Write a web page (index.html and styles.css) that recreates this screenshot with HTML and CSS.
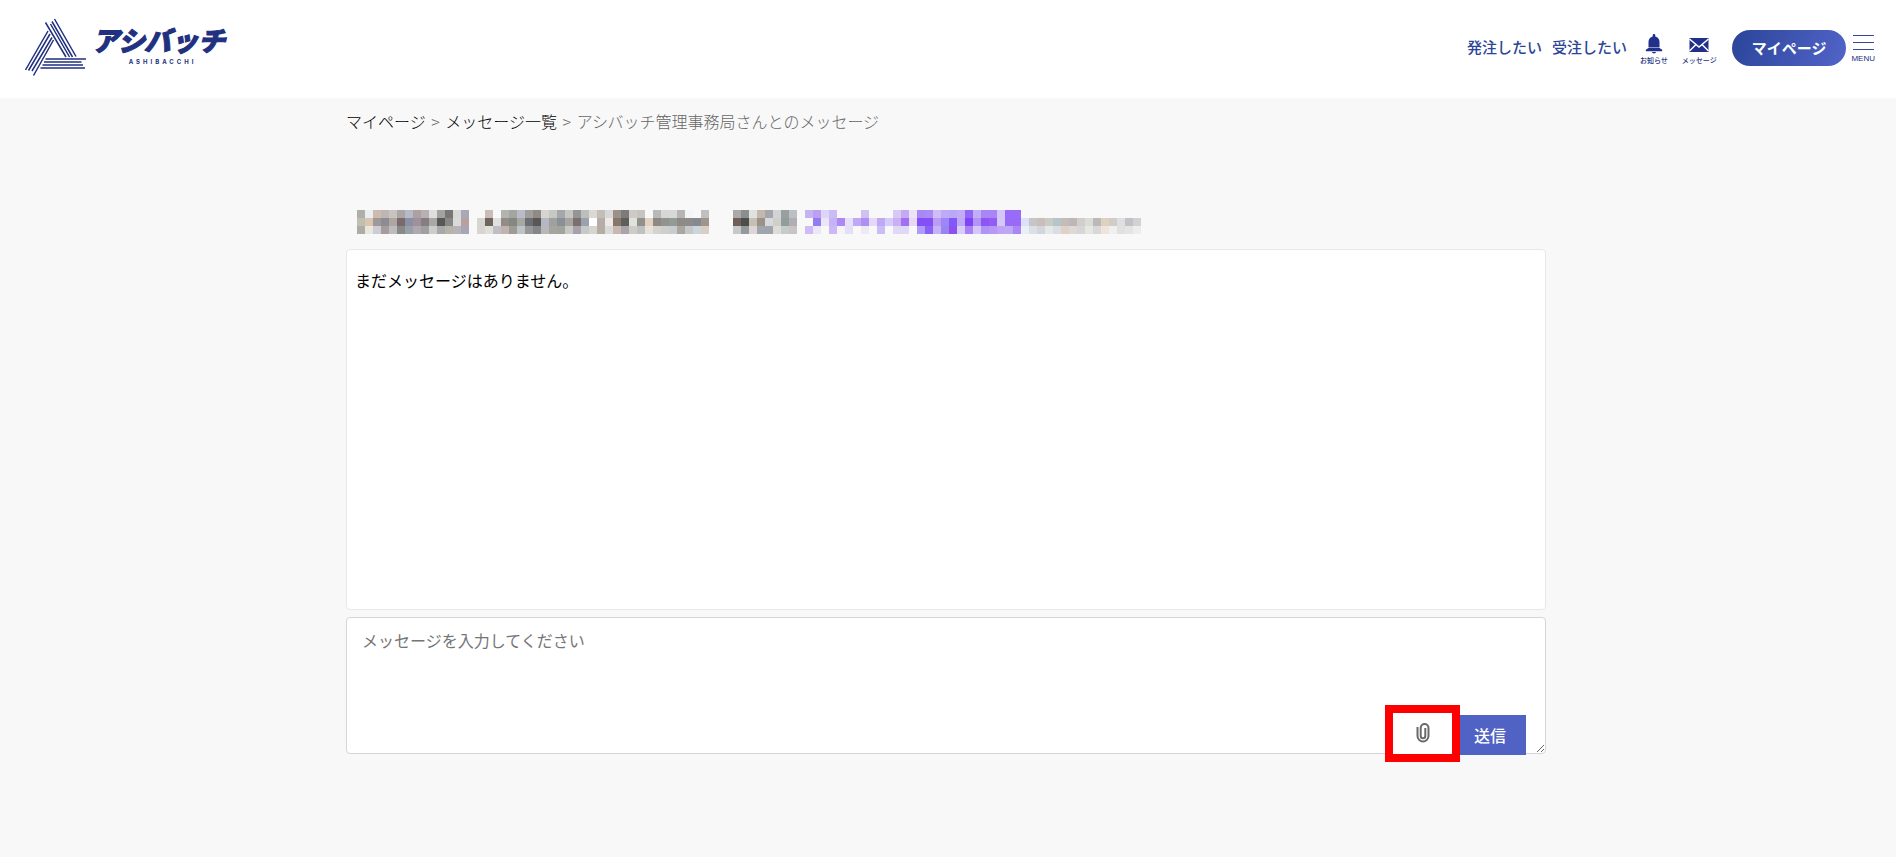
FILE: index.html
```html
<!DOCTYPE html>
<html lang="ja">
<head>
<meta charset="utf-8">
<meta name="viewport" content="width=device-width, initial-scale=1">
<title>アシバッチ管理事務局さんとのメッセージ</title>
<link rel="stylesheet" href="styles.css">
</head>
<body>
<header class="header">
  <a class="logo" href="#">
    <svg class="logo-mark" viewBox="0 0 64 60" aria-hidden="true">
      <path d="M1.5 52 24 13M4.5 52.500 26 16M8 53 28 19.500M9.500 57.500 29.500 22M21.500 4.500 42 39M26.500 6 45.500 39M28 3.500 48.500 39M30.500 1 52 38.500"/>
      <path d="M21.500 41H62M20 44H57.500M18.500 47H59M16.500 50H61"/>
    </svg>
    <span class="logo-text">
      <span class="logo-name">アシバッチ</span>
      <span class="logo-sub">ASHIBACCHI</span>
    </span>
  </a>
  <nav class="nav">
    <a class="nav-link" href="#">発注したい</a>
    <a class="nav-link" href="#">受注したい</a>
    <a class="nav-icon" href="#">
      <svg viewBox="0 0 20 20" width="20" height="20" aria-hidden="true"><path d="M10 0c.9 0 1.300.6 1.300 1.400v1C14 3 15.500 5 15.500 8v5.500h-11V8c0-3 1.500-5 4.200-5.600v-1C8.700.6 9.100 0 10 0zM4.500 14h11l2.700 1.700v1.600H1.800v-1.600zM8 18h4c0 .9-.9 1.400-2 1.400S8 18.900 8 18z"/></svg>
      <span>お知らせ</span>
    </a>
    <a class="nav-icon" href="#">
      <svg viewBox="0 0 20 20" width="20" height="20" aria-hidden="true"><path d="M.5 4h19v14H.5z"/><path class="fold" d="M.5 5 10 13l9.500-8M.5 17 7 10.500M19.500 17 13 10.500"/></svg>
      <span>メッセージ</span>
    </a>
    <a class="mypage" href="#">マイページ</a>
    <button class="menu" type="button">
      <span class="menu-bars"></span>
      <span>MENU</span>
    </button>
  </nav>
</header>
<main class="main">
  <nav class="crumbs" aria-label="パンくず">
    <a href="#">マイページ</a> <span class="sep">&gt;</span> <a href="#">メッセージ一覧</a> <span class="sep">&gt;</span> <span>アシバッチ管理事務局さんとのメッセージ</span>
  </nav>
  <svg class="mosaic" viewBox="0 0 98 3" shape-rendering="crispEdges" aria-hidden="true"></svg>
  <section class="thread">
    <p>まだメッセージはありません。</p>
  </section>
  <form class="composer">
    <textarea class="composer-input" aria-label="メッセージ" placeholder="メッセージを入力してください"></textarea>
    <div class="composer-actions">
      <button class="attach" type="button" aria-label="ファイルを添付">
        <svg viewBox="0 0 14 20" width="14" height="20" aria-hidden="true"><path d="M1.500 4v9a5.500 5.500 0 0 0 11 0V5a3.900 3.900 0 0 0-7.800 0v8a2.300 2.300 0 0 0 4.600 0V5"/></svg>
      </button>
      <button class="send" type="button">送信</button>
    </div>
  </form>
</main>
<script src="mosaic.js"></script>
</body>
</html>
```
FILE: mosaic.js
```js
// Colour of each cell of the obscured name line; "." leaves a cell empty.
const gap = " . ";
const rows = [
  "aeafa9 eaeef0 ccbbae bdb6b2 c9c3c0 aaa6a8 b6bac6 ada0a0 b8b0b2 dedede a4a29e 777575 d8d8d6 a9a8b6" + gap +
  ". cbbcb8 . b2b4b0 a3a5a0 b9bcc8 a09d9b 8d8a88 d8d4d0 c5c8c4 a5a8a8 c5c5c5 939696 bcc0bc ddd8d2 c5bdb8 d8d8d8 9b9188 7d7a7a cfcac6 c6c3c0 . b8b8b8 d6d8d8 d8d8d6 b5b5b5 f2f6f8 . c0c0c0 . . . " +
  "aaa8a8 8c8e8e e0e2e2 c4b8ac a5a5ac d0d4d4 98a09e bcc0c4" + gap +
  "c5b4f4 bba0f2 ddd5f7 ccbbf5 . . . d1c0f4 . . . d8c8f5 c4aaf5 eee3f6 a987f5 ab8bf8 d0bdf8 c0aaf8 b8a8f8 c4acf4 9466f5 c0aef8 a985f5 a985f5 d4c6f8 986cf8 986cf8",

  "c0c0b0 d9c5b0 a09898 8b8d93 b0a5a0 796b6d 8990a5 a0909b 877c80 a8a8a8 585858 888685 dadada b8a0a0" + gap +
  "d8d4d0 70645f e0e0e0 938b86 858880 a8a8a3 6b6e75 5b5655 b3b8c4 a0a09c 8b9098 a8a4a0 7c706f 9aa2b0 ffffff b5ada8 f0e8e5 85776c 605e5c e0e3dc 938f8d e4d2c0 8c8884 939290 939b98 8f8988 8f8b8b 858a92 a0958a . . . " +
  "705f58 4d4d4a c4c0b4 9c908b d6dadc d0d0ca 929c9a b0aeb2" + gap +
  ". 917cf0 eae6f8 c5b4f5 ad88f4 e6e0f8 bfa8f5 ad90f2 e6d8f8 c0a8f5 d5cdf8 c8b0f2 a070f0 e4d8f5 8450f5 8450f5 bb9cf5 9a88f8 8458f8 c0a8f8 7d45f5 b294f5 8e55f5 935cf4 d4c8f8 976bf8 976bf8 dde0f6 c4c6c8 c8bebc cccac4 b6c6c8 c4bcb9 bbb8b6 d2cecd d8ded6 bcbab8 dfd1c2 cfcdc6 dedfe2 c2c2c4 d2d2d2",

  "acada8 eae8dc ccccd4 a69c9c bcbcc0 8b8888 989fa8 b0a8b0 a0a0a0 cccccc a8a8a8 b5b3a8 b5b5b8 a8a5b5" + gap +
  "d8d4d0 dfe0d8 c0bfc4 c0b4b0 a09a95 bcc4c6 989898 838787 b8b8b8 a4a4a0 a3a39e c8c8c4 a6a1ab c8c8c8 d6d4cf b5ada5 dadada c8b8b0 a8a4aa cfccc8 bdc1c2 e6e4da d6d3ce ccd0cc c8ccd0 a8a8a0 c5c8c8 ccd5dc d9cec4 . . . " +
  "c8c8ca 929a9b ded6d6 a0a6ae a0a4ac dcdcd8 c4cccb c8c4c4" + gap +
  "cfbcf4 ebe6f8 . ccb8f4 f4f3f8 e3dff8 . efe8f6 . c9bdf6 . e0d8f6 dfd9f8 . af9cf8 8b60f6 c4b4f4 9b84f2 8a50f0 d8ccf8 a881f5 d4c6f8 b094f5 b49af6 c0a3f5 bda8f6 ad84f3 e8f1f8 dbe0e6 d2d6da e4e8e8 dadde4 e0d0c8 dfd9d6 d6d6d8 e4e8e0 d8d8da f0e4da eff0f0 e0e0e0 e3e5e3 ededec"
];
const svg = document.querySelector(".mosaic");
rows.forEach((row, y) => row.split(/\s+/).forEach((color, x) => {
  if (color === ".") return;
  const cell = document.createElementNS("http://www.w3.org/2000/svg", "rect");
  cell.setAttribute("x", x);
  cell.setAttribute("y", y);
  cell.setAttribute("width", 1);
  cell.setAttribute("height", 1);
  cell.setAttribute("fill", "#" + color);
  svg.append(cell);
}));
```
FILE: styles.css
```css
* { box-sizing: border-box; }

body {
  margin: 0;
  background: #f8f8f8;
  color: #000;
  font-family: "Noto Sans CJK JP", "Noto Sans", sans-serif;
  font-size: 16px;
  line-height: 24px;
}

a { color: inherit; text-decoration: none; }
button { font: inherit; border: 0; padding: 0; cursor: pointer; }

.header {
  display: flex;
  align-items: center;
  justify-content: space-between;
  min-height: 98px;
  padding: 0 21px 2px 24px;
  background: #fff;
  color: #21307f;
}

.logo { display: flex; align-items: center; gap: 4px; }
.logo-mark { width: 64px; height: 60px; fill: none; stroke: #21307f; stroke-width: 1.5; }
.logo-text { display: flex; flex-direction: column; align-items: center; }
.logo-name {
  font-size: 27px;
  font-weight: 900;
  font-style: italic;
  line-height: 24px;
  -webkit-text-stroke: 1px #21307f;
}
.logo-sub { margin-top: 4px; padding-left: 8px; font: 700 6px/12px Inter, sans-serif; letter-spacing: 3px; }

.nav { display: flex; align-items: center; }
.nav-link { margin-right: 10px; padding-bottom: 2px; color: #2b4595; font-size: 15px; font-weight: 500; }
.nav-icon {
  display: flex;
  flex-direction: column;
  align-items: center;
  margin: 4px 12px 0 3px;
  font-size: 7px;
  font-weight: 500;
  line-height: 12px;
}
.nav-icon + .nav-icon { margin: 4px 15px 0 2px; }
.nav-icon svg { fill: #21308a; }
.nav-icon .fold { fill: none; stroke: #fff; stroke-width: 1.5; }

.mypage {
  padding: 6px 20px;
  border-radius: 18px;
  background: linear-gradient(110deg, #2b4599, #5264c9);
  color: #fff;
  font-size: 15px;
  font-weight: 700;
}

.menu {
  display: flex;
  flex-direction: column;
  align-items: center;
  gap: 3px;
  margin: 4px 0 0 5px;
  background: none;
  color: #21307f;
  font: 8px/12px "Liberation Sans", sans-serif;
}
.menu-bars {
  width: 21px;
  height: 15px;
  border: solid #35459a;
  border-width: 1px 0;
  background: linear-gradient(transparent 6px, #35459a 6px 7px, transparent 7px);
}

.main { max-width: 1204px; margin: 0 auto; padding: 11px 4px 40px 0; }

.crumbs { margin-bottom: 77px; color: #666; font-size: 16px; font-weight: 300; }
.crumbs a { color: #000; }
.sep { padding: 0 2px; }

.mosaic { display: block; width: 784px; max-width: 100%; margin: 0 0 15px 11px; }

.thread {
  min-height: 361px;
  padding: 18px 8px;
  border: 1px solid #e7e9e9;
  border-radius: 4px;
  background: #fff;
}
.thread p { margin: 0; }

.composer { position: relative; margin-top: 7px; }
.composer-input {
  display: block;
  width: 100%;
  height: 137px;
  padding: 10px 15px;
  border: 1px solid #d5d6d8;
  border-radius: 4px;
  background: #fff;
  font: inherit;
  resize: vertical;
}
.composer-input::placeholder { color: #757575; }

.composer-actions {
  position: absolute;
  right: 20px;
  bottom: -8px;
  display: flex;
  align-items: flex-end;
}
.attach {
  display: flex;
  justify-content: center;
  width: 75px;
  height: 57px;
  padding: 10px 0 0 1px;
  border: 8px solid #fe0000;
  background: #fff;
}
.attach svg { fill: none; stroke: #6a6a6a; stroke-width: 2; }
.send { margin-bottom: 7px; padding: 8px 20px 8px 14px; background: #5062c4; color: #fff; font-weight: 500; }
```
